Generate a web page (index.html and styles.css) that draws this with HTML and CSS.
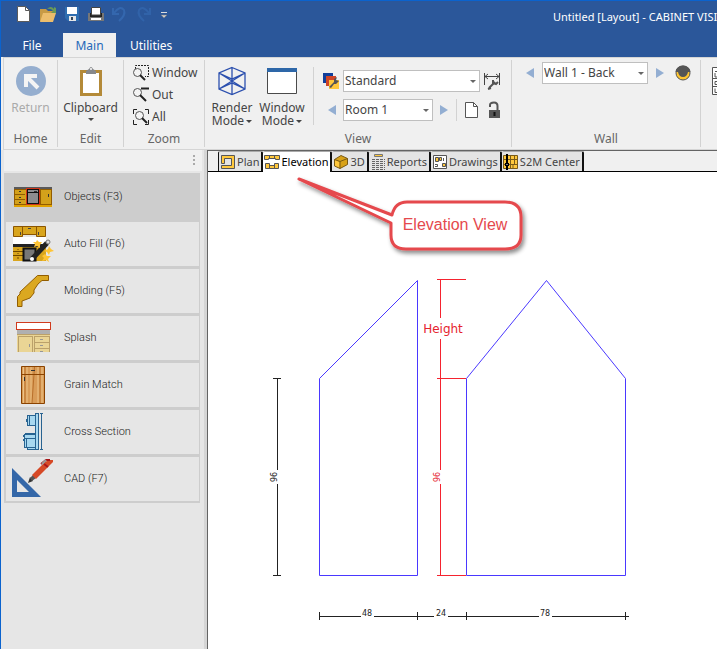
FILE: index.html
```html
<!DOCTYPE html>
<html lang="en">
<head>
<meta charset="utf-8">
<meta name="viewport" content="width=device-width, initial-scale=1">
<title>Untitled [Layout] - CABINET VISION</title>
<link rel="stylesheet" href="styles.css">
</head>
<body>
<div class="app">
  <header class="titlebar">
    <div class="quick">
      <button type="button" aria-label="New"><svg width="18" height="18"><path d="M2.500 1.500H10.500L14.500 5.500V16.500H2.500Z" fill="#fff" stroke="#5b5b5b"/><path d="M10.500 1.500V5.500H14.500" fill="none" stroke="#5b5b5b"/></svg></button>
      <button type="button" aria-label="Open"><svg width="18" height="18"><path d="M1 4H7L9 6H14V16H1Z" fill="#c79a45"/><path d="M4 8H17L14 17H1Z" fill="#ecbd6c"/><path d="M8 4Q12 0 15 4V2L17 3V8H12L14 6Q12 3 8 4Z" fill="#6a9a57"/></svg></button>
      <button type="button" aria-label="Save"><svg width="18" height="18"><path d="M2 2H16V16H5L2 13Z" fill="#2f6eb0"/><path d="M4 2H14V9H4Z" fill="#fff"/><path d="M6 11H13V16H6Z" fill="#e6e6e6"/><path d="M8 12H10V15H8Z" fill="#345"/></svg></button>
      <button type="button" aria-label="Print"><svg width="18" height="18"><path d="M1 8H17V16H1Z" fill="#777"/><path d="M3 8H15V12H3Z" fill="#222"/><path d="M4.500 2.500H13.500V10H4.500Z" fill="#fff" stroke="#444"/><path d="M4 13H14V15H4Z" fill="#fff"/></svg></button>
      <button type="button" aria-label="Undo"><svg width="18" height="18"><path d="M2 3V9H8M3 8Q9 0 13 5Q15 10 8 16" fill="none" stroke="#3467ae" stroke-width="2"/></svg></button>
      <button type="button" aria-label="Redo"><svg width="18" height="18"><path d="M15 3V9H9M14 8Q8 0 4 5Q2 10 9 16" fill="none" stroke="#3163a9" stroke-width="2"/></svg></button>
      <button type="button" class="quick-more" aria-label="Customize"><svg width="8" height="18"><path d="M1 7.500H7" stroke="#ddd"/><path d="M1 10H7L4 13Z" fill="#ccc" stroke="#777" stroke-width=".5"/></svg></button>
    </div>
    <div class="window-title">Untitled [Layout] - CABINET VISION</div>
  </header>
  <nav class="menu">
    <button type="button" class="menu-file">File</button>
    <button type="button" class="menu-active">Main</button>
    <button type="button" class="menu-utilities">Utilities</button>
  </nav>

  <section class="ribbon">
    <div class="group home">
      <div class="group-body">
        <button type="button" class="big" disabled><svg width="30" height="30"><circle cx="15" cy="15" r="15" fill="#95aecf"/><path d="M10 21V10H21M10.500 10.500L22 22" fill="none" stroke="#f4f4f4" stroke-width="4"/></svg><span>Return</span></button>
      </div>
      <div class="group-label">Home</div>
    </div>
    <div class="group edit">
      <div class="group-body">
        <button type="button" class="big"><svg width="30" height="30"><path d="M4 4H26V30H4Z" fill="#b48a38"/><path d="M7 7H23V27H7Z" fill="#fff"/><path d="M10 8V5L13 3Q15-1 17 3L20 5V8Z" fill="#87898c"/><circle cx="15" cy="3" r="1" fill="#fff"/></svg><span>Clipboard</span><i class="caret"></i></button>
      </div>
      <div class="group-label">Edit</div>
    </div>
    <div class="group zoom">
      <div class="group-body zoom-list">
        <button type="button"><svg width="18" height="18"><path d="M3.500 11V1.500H16.500V12.500H13" fill="none" stroke="#222" stroke-dasharray="2 1"/><circle cx="5.500" cy="8.500" r="4" fill="#f4f4f4" stroke="#555"/><path d="M8 11L13 16" stroke="#222" stroke-width="2"/></svg>Window</button>
        <button type="button"><svg width="18" height="18"><path d="M9 2.500H17" stroke="#222" stroke-width="2"/><circle cx="5.500" cy="6.500" r="4" fill="#f4f4f4" stroke="#555"/><path d="M8 9L14 15" stroke="#222" stroke-width="2"/></svg>Out</button>
        <button type="button"><svg width="18" height="18"><path d="M1.500 6V1.500H5M13 1.500H16.500V6M1.500 12V16.500H5M13 16.500H16.500V12" fill="none" stroke="#222"/><circle cx="7.500" cy="7.500" r="4" fill="#f4f4f4" stroke="#555"/><path d="M10 10L15 15" stroke="#222" stroke-width="2"/></svg>All</button>
      </div>
      <div class="group-label">Zoom</div>
    </div>
    <div class="group view">
      <div class="group-body view-body">
        <button type="button" class="big"><svg width="30" height="30"><path d="M15 1.500L28 7V23L15 28.500L2 23V7ZM15 1.500V28.500M2 7L28 23M28 7L2 23M2 7L15 13L28 7M2 23L15 17L28 23" fill="none" stroke="#2b4fae" stroke-width="1.300"/></svg><span>Render<br>Mode<i class="caret"></i></span></button>
        <button type="button" class="big"><svg width="30" height="30"><path d="M.500 2.500H29.500V27.500H.500Z" fill="#fff" stroke="#4a4a4a"/><path d="M0 2H30V6H0Z" fill="#2e67a8"/></svg><span>Window<br>Mode<i class="caret"></i></span></button>
        <div class="view-rows">
          <div class="row">
            <svg width="18" height="18"><path d="M1 1H11V11H1Z" fill="#123f9b"/><path d="M4 4H14V14H4Z" fill="#cf4527"/><path d="M7 8H17V17H7Z" fill="#ffc73b"/><path d="M7 15L12 10V7L15 5L14 8L17 9L14 12H12L9 16Z" fill="#555"/></svg>
            <label class="pick pick-style"><select aria-label="View style"><option>Standard</option></select></label>
            <button type="button" aria-label="Dimension settings"><svg width="18" height="18"><path d="M1.500 1V13M16.500 1V13M2 4.500H16M5 2L2 4.500L5 7M13 2L16 4.500L13 7" fill="none" stroke="#444"/><path d="M6 16L12 10" stroke="#555" stroke-width="2"/><path d="M10 8V11L13 12L15 10M5 17L8 16" fill="none" stroke="#555" stroke-width="2"/></svg></button>
          </div>
          <div class="row">
            <button type="button" class="nav" aria-label="Previous room"><svg width="10" height="12"><path d="M9 1V11L1 6Z" fill="#93aed2"/></svg></button>
            <label class="pick pick-room"><select aria-label="Room"><option>Room 1</option></select></label>
            <button type="button" aria-label="Next room"><svg width="10" height="12"><path d="M1 1V11L9 6Z" fill="#93aed2"/></svg></button>
            <span class="rule"></span>
            <button type="button" class="page" aria-label="New room"><svg width="14" height="18"><path d="M1.500 1.500H9.500L13.500 5.500V16.500H1.500Z" fill="#fff" stroke="#555"/><path d="M9.500 1.500V5.500H13.500" fill="none" stroke="#555"/></svg></button>
            <button type="button" class="lock" aria-label="Unlock room"><svg width="12" height="18"><path d="M2 6V4Q2 1.500 6 1.500Q9.500 1.500 9.500 5V9" fill="none" stroke="#555" stroke-width="2"/><path d="M1 9H12V17H1Z" fill="#555"/><path d="M5.500 11H7.500V15H5.500Z" fill="#111"/></svg></button>
          </div>
        </div>
      </div>
      <div class="group-label">View</div>
    </div>
    <div class="group wall">
      <div class="group-body wall-body">
        <div class="row">
          <button type="button" aria-label="Previous wall"><svg width="10" height="12"><path d="M9 1V11L1 6Z" fill="#93aed2"/></svg></button>
          <label class="pick pick-wall"><select aria-label="Wall"><option>Wall 1 - Back</option></select></label>
          <button type="button" aria-label="Next wall"><svg width="10" height="12"><path d="M1 1V11L9 6Z" fill="#93aed2"/></svg></button>
          <button type="button" class="eye" aria-label="Wall visibility"><svg width="16" height="16"><circle cx="8" cy="8" r="7" fill="#ffc52f" stroke="#555"/><path d="M.500 7Q1 1 8 .500Q15 1 15.500 7L13 7Q12 12 8 12Q4 12 3 7Z" fill="#555"/></svg></button>
        </div>
      </div>
      <div class="group-label">Wall</div>
    </div>
    <div class="group more">
      <button type="button" aria-label="List"><svg width="16" height="28"><path d="M.500.500H15.500V27.500H.500Z" fill="#fff" stroke="#555"/><path d="M3 4.500H16M3 6V10H16M1 11.500H16M3 14.500H16V17.500H3ZM1 19.500H16M3 21.500V25.500H16" fill="none" stroke="#555"/></svg></button>
    </div>
  </section>

  <div class="workspace">
    <aside class="sidebar">
      <div class="grip"><svg width="4" height="12"><path d="M1 0H3V2H1ZM1 4H3V6H1ZM1 8H3V10H1Z" fill="#aaa"/></svg></div>
      <div class="tools">
        <button type="button" class="selected"><svg width="44" height="44" shape-rendering="crispEdges"><path d="M4 14H42V30H4Z" fill="#d3a11b"/><path d="M4 12H42V14H4Z" fill="#59595b"/><path d="M4 30H42V32H4Z" fill="#e0a100"/><path d="M4.500 14.500H16V29.500H4.500ZM30.500 14.500H41.500V29.500H30.500ZM5 19.500H15M5 24.500H15" fill="none" stroke="#925c00"/><path d="M16.500 13.500H29.500V29.500H16.500Z" fill="#8d8d8f" stroke="#d03418"/><path d="M17.500 14.500H28.500V28.500H17.500ZM18 17.500H28" fill="none" stroke="#111"/><path d="M9 16.500H11M9 22H11M9 27H11M24 16.500H27M38.500 19V22" stroke="#333"/></svg>Objects (F3)</button>
        <button type="button"><svg width="44" height="44"><path d="M3 15H36V22H3Z" fill="#fff"/><path d="M3.500 4.500H35.500V14.500H26.500V12.500H12.500V14.500H3.500ZM12.500 4.500V14M26.500 4.500V14" fill="#d9a51d" stroke="#8b5500"/><path d="M3 22H36V25H3Z" fill="#222"/><path d="M3 25H36V39H3Z" fill="#d9a51d"/><path d="M3 29.500H13M3 33.500H13M8 27V28M8 31V32M8 35V37" stroke="#704800"/><path d="M13.500 26.500H25.500V38.500H13.500Z" fill="#777" stroke="#111" stroke-width="2"/><path d="M22 37L37 21" stroke="#222" stroke-width="5"/><circle cx="38" cy="20" r="2" fill="#ddd" stroke="#777"/><circle cx="22" cy="37" r="2" fill="#fff"/><path d="M27 18L29 20L32 20L30 23L30 26L27 24L24 25L25 22L23 20L26 20ZM39 24L41 27L44 29L40 30L39 33L37 30L34 29L38 27ZM35 32L37 34L41 34L38 37L39 40L36 38L32 39L34 36L32 34Z" fill="#ffc434"/><path d="M18 6.500H21M10.500 10V13M28.500 10V13" stroke="#444"/></svg>Auto Fill (F6)</button>
        <button type="button"><svg width="44" height="44"><path d="M38.500 6.500V11.500H32L28 15L24 21V24L20 29L12 32V37.500H7.500V27.500L10 25V23L27.500 6.500Z" fill="#dba820" stroke="#925d00"/></svg>Molding (F5)</button>
        <button type="button"><svg width="44" height="44" shape-rendering="crispEdges"><path d="M6.500 6.500H40.500V13.500H6.500Z" fill="#fff" stroke="#d03a1e"/><path d="M7 14H40V18H7Z" fill="#b0b0b0"/><path d="M7 18H40V36H7Z" fill="#ead595"/><path d="M7 18.500H40M8.500 36V20.500H22.500V36M24.500 36V20.500H39.500V36M24 26.500H40M24 32.500H40" fill="none" stroke="#bba16a"/><path d="M19.500 28V31M30 23.500H33M30 29.500H33M30 35.500H33" stroke="#969696"/></svg>Splash</button>
        <button type="button"><svg width="44" height="44"><path d="M11.500 3.500H34.500V40.500H11.500Z" fill="#d99c58"/><path d="M13.500 4V40M17 4V40M21 4V40M28 4V40M32 4V40" stroke="#edc386"/><path d="M15 4V40M24.500 4L22 40M30 4V40" fill="none" stroke="#b9702b"/><path d="M11.500 3.500H34.500V40.500H11.500ZM12 11.500H34" fill="none" stroke="#8b4300"/><path d="M21 7.500H25M14.500 14V18" stroke="#333"/></svg>Grain Match</button>
        <button type="button"><svg width="44" height="44" shape-rendering="crispEdges"><path d="M25.500 3.500H28.500V39.500H25.500ZM17.500 5.500H25.500V15.500H17.500ZM14.500 24.500H25.500V37.500H14.500ZM17.500 37.500H25.500V39.500H17.500ZM14.500 23.500H25.500V28.500H14.500" fill="#a8d8f0" stroke="#286391"/><path d="M19.500 6V15M16.500 9V12M16.500 28V37M13.500 25V27M13.500 29V31M31.500 4V40M30 3.500H33M30 39.500H33" stroke="#286391"/></svg>Cross Section</button>
        <button type="button"><svg width="44" height="44"><path d="M2 11L31 40H2ZM7 23V35H19Z" fill="#3467a8" fill-rule="evenodd"/><path d="M18 26L20 20L23 24Z" fill="#333"/><path d="M20 21L23 18L26 21L22 24Z" fill="#555"/><path d="M22 18L35 5L39 3H43V5L26 22Z" fill="#d64926"/><path d="M34 7L38 10M31 7L36 3H40" fill="none" stroke="#a91517" stroke-width="2"/><path d="M32 7L36 3" stroke="#999" stroke-width="2"/></svg>CAD (F7)</button>
      </div>
    </aside>

    <main class="document">
      <div class="views">
        <button type="button"><svg width="16" height="16"><path d="M1.500 1.500H14.500V14.500H1.500V11.500H11.500V4.500H4.500V9.500H1.500Z" fill="#ffc83d" stroke="#555"/></svg>Plan</button>
        <button type="button" class="current"><svg width="16" height="16"><path d="M.500 5.500V1.500H15.500V5.500H11.500V4.500H4.500V5.500ZM5.500 1V4M10.500 1V4M1.500 9.500H5.500V14.500H1.500ZM5.500 11.500H10.500V14.500H5.500ZM10.500 9.500H14.500V14.500H10.500Z" fill="#ffc83d" stroke="#555"/></svg>Elevation</button>
        <button type="button"><svg width="16" height="16"><path d="M1.500 5.500L8 1.500L14.500 4.500V10.500L7 14.500L1.500 12Z" fill="#d8a218" stroke="#795a13"/><path d="M2 6L6.500 8V13.500L2 11.500Z" fill="#ffc83d"/><path d="M1.500 5.500L7 7.500V14.500M7 7.500L14.500 4.500" fill="none" stroke="#795a13"/></svg>3D</button>
        <button type="button"><svg width="16" height="16"><path d="M4.500.500H12.500V2.500H4.500Z" fill="#ffc83d" stroke="#777"/><path d="M2 5.500H15M2 7.500H15M2 9.500H15M2 11.500H15M2 13.500H15M2 15.500H15" stroke="#666" stroke-dasharray="3 1"/></svg>Reports</button>
        <button type="button"><svg width="16" height="16"><path d="M1.500 1.500H14.500V14.500H1.500Z" fill="#fff" stroke="#555"/><path d="M3.500 3.500H6.500V7.500H3.500ZM7.500 3.500H9.500V6.500H7.500ZM10.500 9.500H13.500V12.500H10.500Z" fill="#ffc83d" stroke="#555"/><path d="M3 10.500H5.500V12.500H3M11.500 4V7" fill="none" stroke="#555"/></svg>Drawings</button>
        <button type="button"><svg width="16" height="16"><path d="M.500 1.500H14.500V14.500H.500Z" fill="#ffc83d" stroke="#7a5b16"/><path d="M1 5.500H14M1 10.500H14M7.500 2V14M11.500 2V10M10 10V14" stroke="#7a5b16"/><path d="M4 0V16" stroke="#000" stroke-width="2"/><path d="M2 9H6V12H2Z"/><path d="M3.500 10H4.500V11H3.500Z" fill="#fff"/></svg>S2M Center</button>
      </div>
      <svg class="drawing" width="509" height="477" viewBox="208 172 509 477" role="img" aria-label="Elevation drawing">
        <defs><filter id="shadow" x="-20%" y="-20%" width="150%" height="160%"><feDropShadow dx="2" dy="3" stdDeviation="2" flood-color="#000" flood-opacity=".45"/></filter></defs>
        <g fill="none" stroke="#4a38ff">
          <path d="M319.500 575.500V378.500L417.500 280.500V575.500Z"/>
          <path d="M466.500 575.500V378.500L546.500 280.500L625.500 378.500V575.500Z"/>
        </g>
        <g fill="none" stroke="#222">
          <path d="M277.500 379V470M277.500 484V575M273 378.500H281M273 575.500H281"/>
          <path d="M319 616.500H361M374 616.500H434M448 616.500H539M552 616.500H629M319.500 612V620M417.500 612V620M466.500 612V620M625.500 612V620"/>
        </g>
        <path d="M440.500 280V318M440.500 339V470M440.500 484V575M437 279.500H466M437 378.500H466M437 575.500H466" fill="none" stroke="#f5232f"/>
        <g class="dimension">
          <text x="367" y="616">48</text><text x="441" y="616">24</text><text x="545" y="616">78</text>
          <text transform="translate(277 477) rotate(-90)">96</text>
          <text class="red" transform="translate(440 477) rotate(-90)">96</text>
        </g>
        <text class="height-label" x="443" y="333">Height</text>
        <path d="M299 179L392 215Q395 202 407 202H505Q521 202 521 217V235Q521 249 505 249H406Q391 249 391 235V223Z" fill="#fff" stroke="#e5494d" stroke-width="3" stroke-linejoin="round" filter="url(#shadow)"/>
        <text class="callout" x="455" y="230">Elevation View</text>
      </svg>
    </main>
  </div>
</div>
</body>
</html>
```
FILE: styles.css
```css
* { box-sizing: border-box; }
body { margin: 0; font: 12px/14px "Noto Sans", "Open Sans", sans-serif; color: #444; }
button { border: 0; padding: 0; margin: 0; background: none; font: inherit; color: inherit; }
svg { display: block; flex: none; }

.app {
  display: flex;
  flex-direction: column;
  min-height: 100vh;
  overflow: hidden;
  border: solid #0b63ce;
  border-width: 1px 0 0 1px;
  background: #f0f0f0;
}

.titlebar { display: flex; height: 32px; padding: 4px 0 0 11px; background: #2b579a; color: #fff; }
.quick { display: flex; flex: none; align-items: flex-start; }
.quick button { display: flex; justify-content: center; width: 24px; }
.quick .quick-more { width: 15px; }
.window-title { flex: 1; min-width: 0; margin-left: 382px; padding-top: 5px; overflow: hidden; white-space: nowrap; font-size: 11px; }

.menu { display: flex; height: 24px; background: #2b579a; color: #fff; }
.menu button { padding-top: 2px; }
.menu-file { width: 62px; }
.menu .menu-active { width: 53px; background: #f0f0f0; color: #2568b8; }
.menu .menu-utilities { padding: 2px 14px 0; }

.ribbon {
  display: flex;
  height: 93px;
  margin-left: 2px;
  padding: 2px 0;
  border: solid #d5d5d5;
  border-width: 1px 0 1px 1px;
  overflow: hidden;
}
.group { display: flex; flex: none; flex-direction: column; border-right: 1px solid #d2d2d2; }
.group-body { flex: 1; min-height: 0; }
.group-label { height: 15px; text-align: center; color: #666; }
.home { width: 54px; }
.edit { width: 66px; }
.zoom { width: 81px; }
.view { width: 307px; }
.wall { width: 189px; }
.more { border: 0; padding: 7px 0 0 11px; }

.big { display: flex; flex-direction: column; align-items: center; min-width: 100%; padding-top: 6px; line-height: 13px; }
.big svg { margin-bottom: 5px; }
.big:disabled { color: #aaa; }
.caret { display: inline-block; border: solid transparent; border-width: 3px 3px 0; border-top-color: #444; vertical-align: middle; margin-left: 2px; }
.edit .caret { margin: 4px 0 0; }

.zoom-list { display: flex; flex-direction: column; padding: 2px 0 0 8px; }
.zoom-list button { display: flex; align-items: center; gap: 2px; height: 22px; }

.view-body { display: flex; align-items: flex-start; }
.view-body .big { min-width: 0; width: 50px; }
.view-body .big:first-child { margin-left: 2px; }
.view-rows { display: flex; flex-direction: column; gap: 7px; height: 58px; margin: 7px 0 0 6px; padding: 3px 0 0 8px; border-left: 1px solid #d2d2d2; }
.row { display: flex; align-items: center; height: 22px; gap: 3px; }
.row .nav { margin: 0 3px 0 5px; }
.row .rule { width: 1px; height: 22px; margin: 0 4px; background: #d2d2d2; }
.row .lock { margin-left: 7px; }
.row .eye { margin-left: 8px; }
.wall-body { padding: 2px 0 0 13px; }
.wall .row { gap: 7px; }
.wall .row .eye { margin-left: 3px; }
.pick { position: relative; display: block; }
.pick::after { content: ""; position: absolute; right: 4px; top: 10px; border: solid transparent; border-width: 3px 3px 0; border-top-color: #666; pointer-events: none; }
.pick select { display: block; width: 100%; height: 22px; padding: 0 12px 0 1px; appearance: none; border: 1px solid #bfbfbf; border-radius: 0; background: #fff; color: #444; font: inherit; }
.pick-style { width: 137px; }
.pick-room { width: 90px; margin-right: 3px; }
.pick-wall { width: 106px; }

.workspace { display: flex; flex: 1; }
.sidebar { flex: none; width: 206px; padding-left: 3px; border-right: 3px solid #d5d5d5; background: #e6e6e6; }
.grip { display: flex; justify-content: flex-end; height: 21px; margin-right: 2px; padding: 5px 6px 0 0; background: #f0f0f0; }
.tools { display: flex; flex-direction: column; gap: 3px; width: 196px; margin-top: 2px; padding: 2px 1px 2px 2px; background: #cdcdcd; }
.tools button { display: flex; align-items: center; gap: 10px; height: 44px; padding-left: 4px; background: #e6e6e6; font: 300 11px/14px Roboto, sans-serif; color: #222; }
.tools .selected { background: #cdcdcd; }

.document { flex: 1; min-width: 0; overflow: hidden; border: solid #646464; border-width: 1px 0 0 1px; background: #fff; }
.views { display: flex; height: 21px; padding: 0 0 0 10px; border-bottom: 1px solid #000; background: #f0f0f0; font-size: 11px; }
.views button { display: flex; flex: none; align-items: center; gap: 1px; height: 20px; padding: 0 2px 0 1px; border-right: 2px solid #111; border-top: 1px solid #aaa; border-radius: 2px 2px 0 0; background: #e4e4e4; }
.views button:first-child { border-left: 1px solid #111; }
.views .current { height: 21px; padding-bottom: 1px; background: #fff; color: #000; }

.dimension { font: 8px "DejaVu Sans", sans-serif; text-anchor: middle; fill: #222; }
.dimension .red, .height-label { fill: #e5232f; }
.height-label { font: 12px "DejaVu Sans", sans-serif; text-anchor: middle; }
.callout { font: 16px "Liberation Sans", sans-serif; text-anchor: middle; fill: #e5494d; }
```
